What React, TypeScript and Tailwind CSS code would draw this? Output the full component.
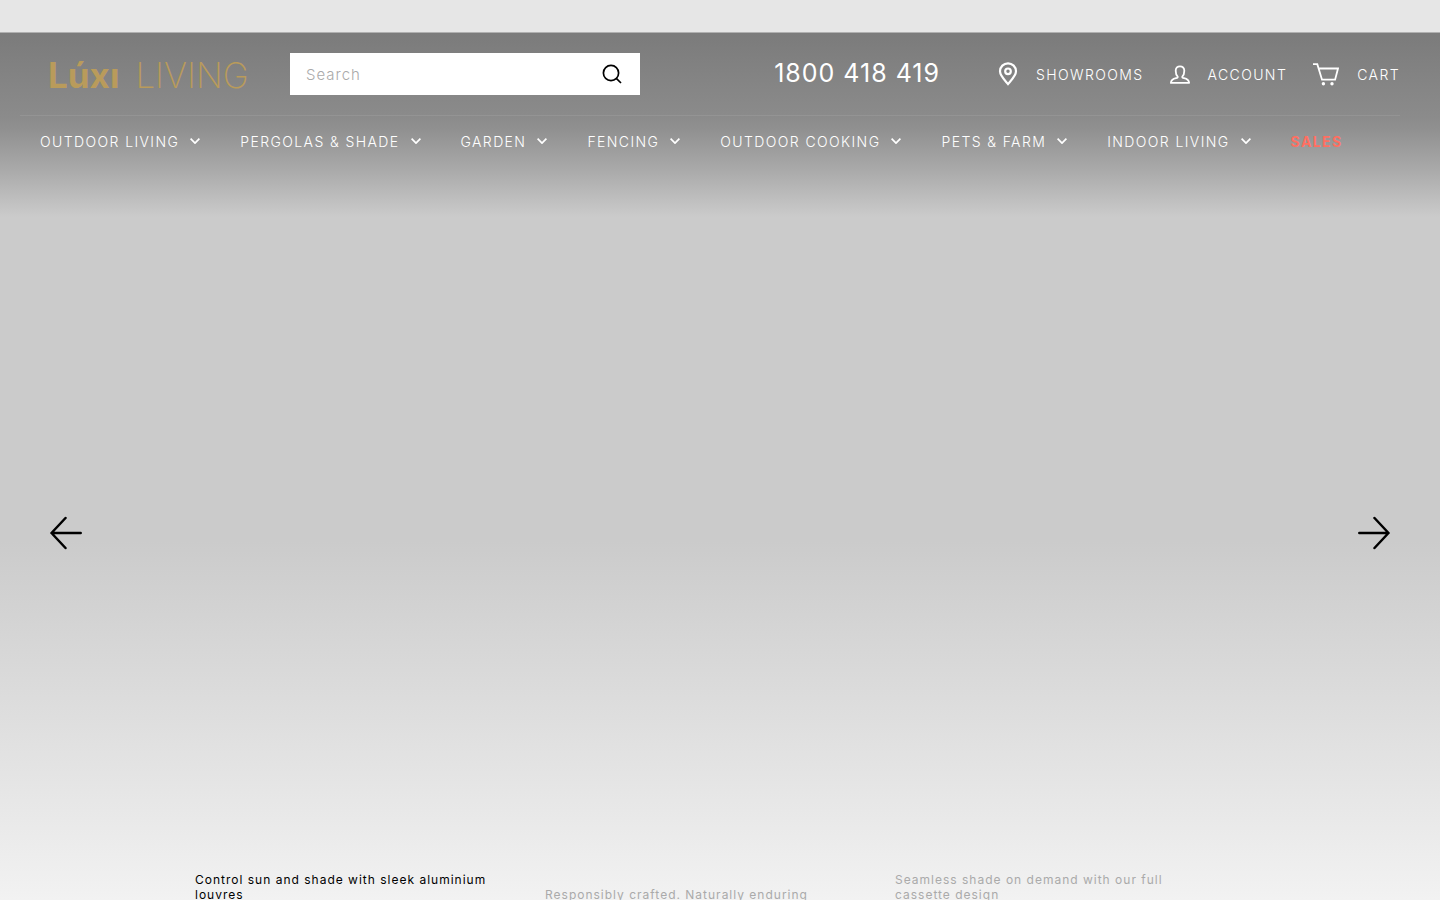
import type { ReactNode } from 'react'

const menu = [
  'Outdoor Living',
  'Pergolas & Shade',
  'Garden',
  'Fencing',
  'Outdoor Cooking',
  'Pets & Farm',
  'Indoor Living',
]

const slides = [
  'Control sun and shade with sleek aluminium louvres',
  'Responsibly crafted. Naturally enduring',
  'Seamless shade on demand with our full cassette design',
]

function Chevron() {
  return (
    <svg width="10" height="6" viewBox="0 0 10 6" fill="none" stroke="currentColor" strokeWidth="1.7" aria-hidden="true">
      <path d="M0.6 0.7 5 5.1 9.4 0.7" />
    </svg>
  )
}

function PinIcon() {
  return (
    <svg width="20" height="24" viewBox="0 0 20 24" fill="none" stroke="currentColor" strokeWidth="2.2" aria-hidden="true">
      <path d="M10 22C7.5 19 2 14 2 9.3a8 8 0 0 1 16 0c0 4.7-5.5 9.7-8 12.7Z" />
      <circle cx="10" cy="9.3" r="2.8" />
    </svg>
  )
}

function AccountIcon() {
  return (
    <svg width="20" height="20" viewBox="0 0 20 20" fill="none" stroke="currentColor" strokeWidth="1.8" strokeLinejoin="round" aria-hidden="true">
      <path d="M7.7 12.6C6.3 11.3 5.7 9.5 5.7 6.7 5.7 3.9 7.5 2.3 10 2.3s4.3 1.6 4.3 4.4c0 2.8-.6 4.6-2 5.9-.2.9.3 1.3 1.7 1.6 3 .6 4.900 1.800 5.100 4.700H.9c.2-2.900 2.100-4.100 5.100-4.700 1.400-.3 1.900-.7 1.700-1.600Z" />
    </svg>
  )
}

function CartIcon() {
  return (
    <svg width="26" height="23" viewBox="0 0 26 23" fill="none" stroke="currentColor" strokeWidth="1.8" aria-hidden="true">
      <path d="M0 1.2h4.3L9 16.700h13.100L25 5.500H5.600" />
      <circle cx="10.4" cy="20.7" r="1.7" fill="currentColor" stroke="none" />
      <circle cx="19" cy="20.7" r="1.7" fill="currentColor" stroke="none" />
    </svg>
  )
}

function ArrowIcon({ flip = false }: { flip?: boolean }) {
  return (
    <svg
      width="32"
      height="34"
      viewBox="0 0 32 34"
      fill="none"
      stroke="currentColor"
      strokeWidth="2.5"
      strokeLinecap="round"
      strokeLinejoin="round"
      className={flip ? 'rotate-180' : ''}
      aria-hidden="true"
    >
      <path d="M15.5 2 1.5 17l14 15M1.5 17h29.2" />
    </svg>
  )
}

function ToolLink({ icon, children }: { icon: ReactNode; children: ReactNode }) {
  return (
    <a href="#" className="flex items-center gap-[18px]">
      {icon}
      <span>{children}</span>
    </a>
  )
}

export default function App() {
  return (
    <div className="flex h-screen flex-col overflow-hidden bg-[#e6e6e6] font-['Inter','Liberation_Sans',sans-serif] text-black">
      <div className="h-[33px] shrink-0 border-b border-[#b0b0b0]" />

      <main className="flex flex-1 flex-col bg-[linear-gradient(to_bottom,#cbcbcb_0,#cbcbcb_508px,#d8d8d8_628px,#e7e7e7_768px,#f2f2f2_100%)]">
        <header className="bg-[linear-gradient(to_bottom,#7b7b7b_0,#8b8b8b_84px,#909090_96px,#a9a9a9_136px,#cbcbcb_184px)] pr-10 pb-13 pl-5 text-white">
          <div className="flex h-[83px] items-center border-b border-[#949494] pl-7">
            <a
              href="#"
              aria-label="Lúxi Living"
              className="flex w-[242px] shrink-0 items-baseline gap-4 pt-0.5 text-[35px] leading-10 text-[#b99b5b]"
            >
              <span className="font-bold">Lúxı</span>
              <span className="font-extralight">LIVING</span>
            </a>

            <form className="flex h-10.5 w-[350px] items-center bg-white px-4" role="search">
              <input
                type="search"
                aria-label="Search"
                placeholder="Search"
                className="h-10 min-w-0 flex-1 text-[15px] font-light tracking-[1px] text-black placeholder:text-[#aaaaaa] focus:outline-none"
              />
              <button type="button" aria-label="Submit search" className="p-0.5 text-black">
                <svg width="20" height="20" viewBox="0 0 20 20" fill="none" stroke="currentColor" strokeWidth="1.7" aria-hidden="true">
                  <circle cx="9" cy="9" r="7.6" />
                  <path d="m14.3 14.3 4.700 4.700" />
                </svg>
              </button>
            </form>

            <div className="ml-auto flex items-center gap-[26px] text-[14px] font-light tracking-widest uppercase">
              <a href="tel:1800418419" className="mr-8 text-[25px] font-normal tracking-[1px]">
                1800 418 419
              </a>
              <ToolLink icon={<PinIcon />}>Showrooms</ToolLink>
              <ToolLink icon={<AccountIcon />}>Account</ToolLink>
              <ToolLink icon={<CartIcon />}>Cart</ToolLink>
            </div>
          </div>

          <nav className="flex h-[50px] items-center gap-10 pl-5 text-[14px] font-light tracking-widest whitespace-nowrap uppercase">
            {menu.map((label) => (
              <a key={label} href="#" className="flex items-center gap-[11px]">
                {label}
                <Chevron />
              </a>
            ))}
            <a href="#" className="font-bold text-[#ff6f61]">
              Sales
            </a>
          </nav>
        </header>

        <div className="flex flex-1 items-center justify-between px-[50px] pb-6">
          <button type="button" aria-label="Previous slide">
            <ArrowIcon />
          </button>
          <button type="button" aria-label="Next slide">
            <ArrowIcon flip />
          </button>
        </div>

        <div className="mx-auto -mb-0.5 grid w-full max-w-[1050px] grid-cols-3 items-end text-[12px] leading-[15px] tracking-[1px]">
          {slides.map((text, i) => (
            <button
              key={text}
              type="button"
              className={i === 0 ? 'pr-10 text-left text-black' : 'pr-10 text-left text-[#aaaaaa]'}
            >
              {text}
            </button>
          ))}
        </div>
      </main>
    </div>
  )
}
